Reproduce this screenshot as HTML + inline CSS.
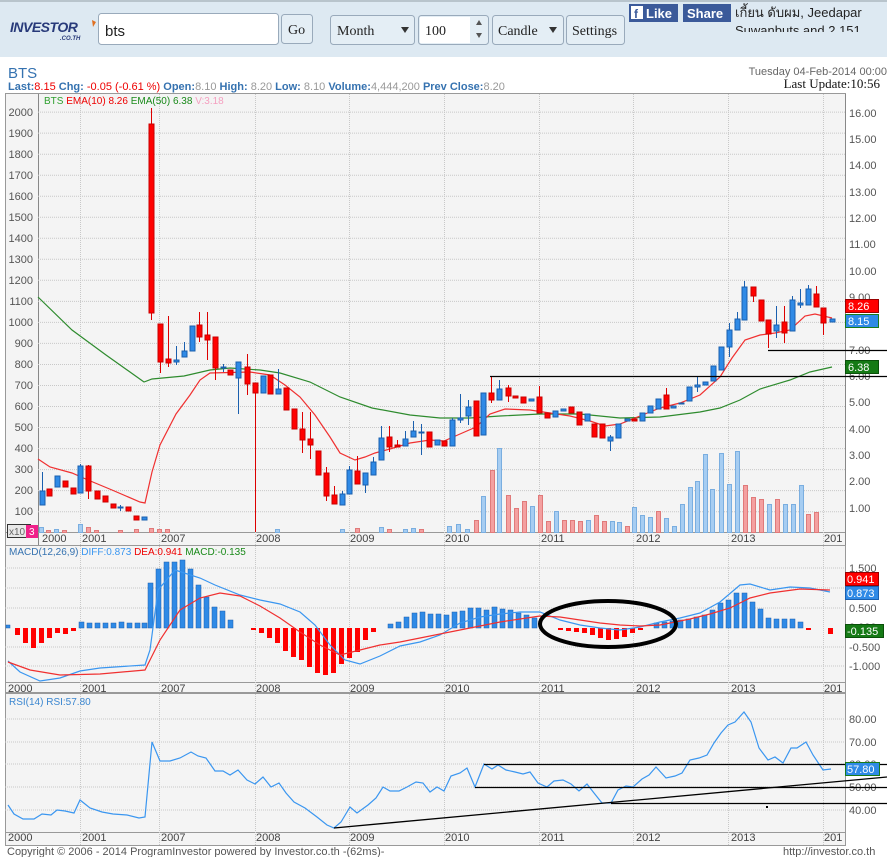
<!DOCTYPE html>
<html><head><meta charset="utf-8"><style>
html,body{margin:0;padding:0;background:#fff;width:887px;height:857px;overflow:hidden;font-family:"Liberation Sans","Noto Sans CJK SC",sans-serif}
svg{display:block}
.r{fill:#ff0000;stroke:#c80000;stroke-width:1}
.b{fill:#2f8ae6;stroke:#1a5fae;stroke-width:1}
.wr{stroke:#d00;stroke-width:1}
.wb{stroke:#1a5fae;stroke-width:1}
.vp{fill:#f4a0a0;stroke:#e07a7a}
.vb{fill:#a6cdf2;stroke:#7aaee0}
.g{stroke:#c8c8c8;stroke-dasharray:1 1;stroke-width:1}
.ax{font-size:11px;fill:#555}
.dt{font-size:11px;fill:#444}
</style></head><body>
<svg width="887" height="857" xmlns="http://www.w3.org/2000/svg" font-family="Liberation Sans, sans-serif">
<rect x="0" y="0" width="887" height="57" fill="#dde9f2"/>
<rect x="0" y="0" width="887" height="2" fill="#b8c4cc"/>
<text x="10" y="32" font-size="14" font-weight="bold" font-style="italic" fill="#283a7a" letter-spacing="-0.5">INVESTOR</text>
<text x="60" y="40" font-size="6" font-weight="bold" font-style="italic" fill="#283a7a">.CO.TH</text>
<path d="M92 20 L96 22 L93 27 Z" fill="#e07020"/>
<rect x="98.5" y="13.5" width="180" height="31" rx="3" fill="#fff" stroke="#9ab"/>
<text x="105" y="36" font-size="15" fill="#222">bts</text>
<rect x="281.5" y="14.5" width="31" height="29" rx="3" fill="#e4eef5" stroke="#9ab"/>
<text x="288" y="34" font-size="14" font-family="Liberation Serif, serif" fill="#222">Go</text>
<rect x="330.5" y="15.5" width="84" height="29" rx="3" fill="#e4eef5" stroke="#9ab"/>
<text x="337" y="35" font-size="14" font-family="Liberation Serif, serif" fill="#222">Month</text>
<path d="M401 27 L409 27 L405 33 Z" fill="#333"/>
<rect x="418.5" y="15.5" width="70" height="29" rx="3" fill="#e4eef5" stroke="#9ab"/>
<rect x="420" y="17" width="50" height="26" fill="#fff"/>
<text x="425" y="35" font-size="14" font-family="Liberation Serif, serif" fill="#222">100</text>
<path d="M476 25 L482 25 L479 20 Z M476 33 L482 33 L479 38 Z" fill="#555"/>
<rect x="492.5" y="15.5" width="71" height="29" rx="3" fill="#e4eef5" stroke="#9ab"/>
<text x="498" y="35" font-size="14" font-family="Liberation Serif, serif" fill="#222">Candle</text>
<path d="M549 27 L557 27 L553 33 Z" fill="#333"/>
<rect x="566.5" y="15.5" width="58" height="29" rx="3" fill="#e4eef5" stroke="#9ab"/>
<text x="572" y="35" font-size="14" font-family="Liberation Serif, serif" fill="#222">Settings</text>
<rect x="629" y="4" width="49" height="18" fill="#3b5a9a"/>
<rect x="631" y="6" width="12" height="13" fill="#fff"/>
<text x="634" y="18" font-size="12" font-weight="bold" fill="#3b5a9a">f</text>
<text x="646" y="18" font-size="13" font-weight="bold" fill="#fff">Like</text>
<rect x="683" y="4" width="48" height="18" fill="#3b5a9a"/>
<text x="687" y="18" font-size="13" font-weight="bold" fill="#fff">Share</text>
<text x="735" y="17" font-size="13" fill="#222" font-family="Liberation Sans, WenQuanYi Zen Hei, sans-serif">เกี้ยน ดับผม, Jeedapar</text>
<svg x="735" y="22" width="152" height="10"><text x="0" y="13" font-size="13" fill="#222">Suwanbuts and 2,151</text></svg>
<text x="8" y="78" font-size="15" fill="#3572b0">BTS</text>
<text x="8" y="90" font-size="11" font-weight="bold" fill="#3572b0">Last:<tspan fill="#e00" font-weight="normal">8.15 </tspan>Chg: <tspan fill="#e00" font-weight="normal">-0.05 (-0.61 %) </tspan> Open:<tspan fill="#999" font-weight="normal">8.10 </tspan>High: <tspan fill="#999" font-weight="normal">8.20 </tspan>Low: <tspan fill="#999" font-weight="normal">8.10 </tspan>Volume:<tspan fill="#999" font-weight="normal">4,444,200 </tspan> Prev Close:<tspan fill="#999" font-weight="normal">8.20</tspan></text>
<text x="887" y="75" font-size="11" fill="#666" text-anchor="end">Tuesday 04-Feb-2014 00:00</text>
<text x="880" y="88" font-size="13" fill="#111" text-anchor="end" font-family="Liberation Serif, serif">Last Update:10:56</text>

<rect x="5.5" y="93.5" width="840" height="452" fill="#f4f4f4" stroke="#999"/>
<line x1="38.5" y1="94" x2="38.5" y2="545" stroke="#888"/>
<line x1="5" y1="532.5" x2="845" y2="532.5" stroke="#999"/>
<rect x="846" y="94" width="41" height="451" fill="#fff"/>
<line x1="845.5" y1="94" x2="845.5" y2="545" stroke="#888"/>
<g class="g">
<line x1="38" y1="511.7" x2="845" y2="511.7"/><line x1="38" y1="490.6" x2="845" y2="490.6"/><line x1="38" y1="469.6" x2="845" y2="469.6"/><line x1="38" y1="448.6" x2="845" y2="448.6"/><line x1="38" y1="427.5" x2="845" y2="427.5"/><line x1="38" y1="406.5" x2="845" y2="406.5"/><line x1="38" y1="385.5" x2="845" y2="385.5"/><line x1="38" y1="364.5" x2="845" y2="364.5"/><line x1="38" y1="343.4" x2="845" y2="343.4"/><line x1="38" y1="322.4" x2="845" y2="322.4"/><line x1="38" y1="301.4" x2="845" y2="301.4"/><line x1="38" y1="280.3" x2="845" y2="280.3"/><line x1="38" y1="259.3" x2="845" y2="259.3"/><line x1="38" y1="238.3" x2="845" y2="238.3"/><line x1="38" y1="217.2" x2="845" y2="217.2"/><line x1="38" y1="196.2" x2="845" y2="196.2"/><line x1="38" y1="175.2" x2="845" y2="175.2"/><line x1="38" y1="154.2" x2="845" y2="154.2"/><line x1="38" y1="133.1" x2="845" y2="133.1"/><line x1="38" y1="112.1" x2="845" y2="112.1"/>
<line x1="80.5" y1="94" x2="80.5" y2="545"/><line x1="159.5" y1="94" x2="159.5" y2="545"/><line x1="255.5" y1="94" x2="255.5" y2="545"/><line x1="349.5" y1="94" x2="349.5" y2="545"/><line x1="444.5" y1="94" x2="444.5" y2="545"/><line x1="539.5" y1="94" x2="539.5" y2="545"/><line x1="633.5" y1="94" x2="633.5" y2="545"/><line x1="728.5" y1="94" x2="728.5" y2="545"/><line x1="823.5" y1="94" x2="823.5" y2="545"/>
</g>
<g class="ax" text-anchor="end">
<text x="33" y="515">100</text><text x="33" y="494">200</text><text x="33" y="473">300</text><text x="33" y="452">400</text><text x="33" y="431">500</text><text x="33" y="410">600</text><text x="33" y="389">700</text><text x="33" y="368">800</text><text x="33" y="347">900</text><text x="33" y="326">1000</text><text x="33" y="305">1100</text><text x="33" y="284">1200</text><text x="33" y="263">1300</text><text x="33" y="242">1400</text><text x="33" y="221">1500</text><text x="33" y="200">1600</text><text x="33" y="179">1700</text><text x="33" y="158">1800</text><text x="33" y="137">1900</text><text x="33" y="116">2000</text>
</g>
<g class="ax">
<text x="849" y="512">1.00</text><text x="849" y="485">2.00</text><text x="849" y="459">3.00</text><text x="849" y="433">4.00</text><text x="849" y="406">5.00</text><text x="849" y="380">6.00</text><text x="849" y="354">7.00</text><text x="849" y="327">8.00</text><text x="849" y="301">9.00</text><text x="849" y="275">10.00</text><text x="849" y="248">11.00</text><text x="849" y="222">12.00</text><text x="849" y="196">13.00</text><text x="849" y="169">14.00</text><text x="849" y="143">15.00</text><text x="849" y="117">16.00</text>
</g>
<text x="44" y="104" font-size="10"><tspan fill="#2ea02e">BTS </tspan><tspan fill="#e00">EMA(10) 8.26 </tspan><tspan fill="#1a8a1a">EMA(50) 6.38 </tspan><tspan fill="#f5a0c0">V:3.18</tspan></text>

<g>
<rect class="vb" x="39.5" y="527.5" width="4" height="5"/><rect class="vp" x="46.5" y="530.5" width="4" height="2"/><rect class="vb" x="54.5" y="529.5" width="4" height="3"/><rect class="vp" x="62.5" y="530.5" width="4" height="2"/><rect class="vb" x="78.5" y="524.5" width="4" height="8"/><rect class="vp" x="86.5" y="527.5" width="4" height="5"/><rect class="vp" x="94.5" y="530.5" width="4" height="2"/><rect class="vp" x="118.5" y="530.5" width="4" height="2"/><rect class="vp" x="134.5" y="529.5" width="4" height="3"/><rect class="vp" x="149.5" y="528.5" width="4" height="4"/><rect class="vp" x="157.5" y="529.5" width="4" height="3"/><rect class="vp" x="165.5" y="529.5" width="4" height="3"/><rect class="vb" x="275.5" y="529.5" width="4" height="3"/><rect class="vb" x="340.5" y="529.5" width="4" height="3"/><rect class="vp" x="355.5" y="528.5" width="4" height="4"/><rect class="vb" x="379.5" y="527.5" width="4" height="5"/><rect class="vp" x="387.5" y="529.5" width="4" height="3"/><rect class="vb" x="403.5" y="529.5" width="4" height="3"/><rect class="vb" x="411.5" y="528.5" width="4" height="4"/><rect class="vp" x="419.5" y="529.5" width="4" height="3"/>
<rect class="vb" x="447.5" y="526.5" width="4" height="6"/><rect class="vb" x="456.5" y="524.5" width="4" height="8"/><rect class="vb" x="465.5" y="529.5" width="4" height="3"/><rect class="vp" x="474.5" y="520.5" width="4" height="12"/><rect class="vb" x="481.5" y="496.5" width="4" height="36"/><rect class="vp" x="490.5" y="470.5" width="4" height="62"/><rect class="vb" x="497.5" y="448.5" width="4" height="84"/><rect class="vp" x="506.5" y="495.5" width="4" height="37"/><rect class="vp" x="514.5" y="508.5" width="4" height="24"/><rect class="vp" x="522.5" y="501.5" width="4" height="31"/><rect class="vb" x="530.5" y="506.5" width="4" height="26"/><rect class="vp" x="538.5" y="495.5" width="4" height="37"/><rect class="vp" x="546.5" y="521.5" width="4" height="11"/><rect class="vb" x="554.5" y="511.5" width="4" height="21"/><rect class="vp" x="562.5" y="520.5" width="4" height="12"/><rect class="vp" x="570.5" y="520.5" width="4" height="12"/><rect class="vp" x="578.5" y="521.5" width="4" height="11"/><rect class="vb" x="586.5" y="520.5" width="4" height="12"/><rect class="vp" x="594.5" y="515.5" width="4" height="17"/><rect class="vp" x="602.5" y="521.5" width="4" height="11"/><rect class="vb" x="610.5" y="521.5" width="4" height="11"/><rect class="vb" x="617.5" y="522.5" width="4" height="10"/><rect class="vp" x="625.5" y="526.5" width="4" height="6"/><rect class="vb" x="632.5" y="507.5" width="4" height="25"/><rect class="vb" x="640.5" y="515.5" width="4" height="17"/><rect class="vb" x="648.5" y="517.5" width="4" height="15"/><rect class="vp" x="656.5" y="511.5" width="4" height="21"/><rect class="vb" x="664.5" y="518.5" width="4" height="14"/><rect class="vb" x="672.5" y="526.5" width="4" height="6"/><rect class="vb" x="680.5" y="504.5" width="4" height="28"/><rect class="vb" x="688.5" y="487.5" width="4" height="45"/><rect class="vb" x="695.5" y="481.5" width="4" height="51"/><rect class="vb" x="703.5" y="454.5" width="4" height="78"/><rect class="vb" x="710.5" y="489.5" width="4" height="43"/><rect class="vb" x="719.5" y="453.5" width="4" height="79"/><rect class="vb" x="727.5" y="484.5" width="4" height="48"/><rect class="vb" x="735.5" y="451.5" width="4" height="81"/><rect class="vp" x="743.5" y="485.5" width="4" height="47"/><rect class="vp" x="751.5" y="497.5" width="4" height="35"/><rect class="vp" x="759.5" y="499.5" width="4" height="33"/><rect class="vb" x="767.5" y="504.5" width="4" height="28"/><rect class="vp" x="775.5" y="499.5" width="4" height="33"/><rect class="vb" x="783.5" y="504.5" width="4" height="28"/><rect class="vb" x="791.5" y="504.5" width="4" height="28"/><rect class="vb" x="799.5" y="485.5" width="4" height="47"/><rect class="vp" x="806.5" y="514.5" width="4" height="18"/><rect class="vp" x="814.5" y="512.5" width="4" height="20"/>
</g>

<polyline fill="none" stroke="#2e8b2e" stroke-width="1.2" points="38,297 72,330 106,355 144,382 152,379 184,376 210,370 230,368 260,370 280,373 310,382 340,397 372,408 410,415 440,418 470,418 500,416 540,414 580,414 620,418 660,417 700,412 720,408 740,400 760,389 790,380 810,372 832,367"/>
<polyline fill="none" stroke="#f03030" stroke-width="1.2" points="38,459 50,467 72,473 88,480 112,490 140,502 145,503 152,472 160,445 176,414 190,395 200,380 210,373 250,372 270,375 285,385 300,397 315,415 330,437 340,453 355,460 365,457 375,453 390,449 410,443 430,440 444,441 460,434 476,427 490,414 505,409 530,410 550,413 570,416 590,421 605,426 620,424 640,416 660,408 680,403 700,395 720,377 732,358 745,340 760,335 775,333 790,330 805,316 815,314 832,318"/>

<g class="wr">
<line x1="88.5" y1="465" x2="88.5" y2="499"/><line x1="151.5" y1="108" x2="151.5" y2="320"/><line x1="160.5" y1="324" x2="160.5" y2="373"/><line x1="168.5" y1="316" x2="168.5" y2="367"/><line x1="199.5" y1="312" x2="199.5" y2="342"/><line x1="207.5" y1="312" x2="207.5" y2="360"/><line x1="215.5" y1="337" x2="215.5" y2="380"/><line x1="247.5" y1="354" x2="247.5" y2="395"/><line x1="255.5" y1="383" x2="255.5" y2="532"/><line x1="302.5" y1="412" x2="302.5" y2="453"/><line x1="310.5" y1="412" x2="310.5" y2="459"/><line x1="326.5" y1="467" x2="326.5" y2="501"/><line x1="334.5" y1="486" x2="334.5" y2="504"/><line x1="357.5" y1="456" x2="357.5" y2="484"/><line x1="389.5" y1="426" x2="389.5" y2="452"/><line x1="397.5" y1="440" x2="397.5" y2="447"/><line x1="491.5" y1="376" x2="491.5" y2="403"/><line x1="508.5" y1="385" x2="508.5" y2="402"/><line x1="539.5" y1="386" x2="539.5" y2="413"/><line x1="666.5" y1="388" x2="666.5" y2="409"/><line x1="753.5" y1="287" x2="753.5" y2="302"/><line x1="768.5" y1="320" x2="768.5" y2="348"/><line x1="784.5" y1="306" x2="784.5" y2="343"/><line x1="816.5" y1="286" x2="816.5" y2="307"/><line x1="823.5" y1="308" x2="823.5" y2="335"/>
</g>
<g class="wb">
<line x1="42.5" y1="472" x2="42.5" y2="505"/><line x1="80.5" y1="464" x2="80.5" y2="493"/><line x1="120.5" y1="505" x2="120.5" y2="511"/><line x1="176.5" y1="346" x2="176.5" y2="365"/><line x1="184.5" y1="342" x2="184.5" y2="357"/><line x1="223.5" y1="364" x2="223.5" y2="372"/><line x1="238.5" y1="362" x2="238.5" y2="414"/><line x1="278.5" y1="369" x2="278.5" y2="394"/><line x1="342.5" y1="491" x2="342.5" y2="505"/><line x1="349.5" y1="466" x2="349.5" y2="494"/><line x1="365.5" y1="473" x2="365.5" y2="493"/><line x1="373.5" y1="457" x2="373.5" y2="475"/><line x1="381.5" y1="426" x2="381.5" y2="460"/><line x1="405.5" y1="431" x2="405.5" y2="446"/><line x1="413.5" y1="421" x2="413.5" y2="437"/><line x1="421.5" y1="424" x2="421.5" y2="455"/><line x1="452.5" y1="418" x2="452.5" y2="446"/><line x1="460.5" y1="394" x2="460.5" y2="423"/><line x1="468.5" y1="400" x2="468.5" y2="425"/><line x1="499.5" y1="380" x2="499.5" y2="400"/><line x1="610.5" y1="435" x2="610.5" y2="451"/><line x1="697.5" y1="376" x2="697.5" y2="392"/><line x1="729.5" y1="323" x2="729.5" y2="357"/><line x1="737.5" y1="312" x2="737.5" y2="330"/><line x1="744.5" y1="281" x2="744.5" y2="320"/><line x1="776.5" y1="306" x2="776.5" y2="338"/><line x1="792.5" y1="296" x2="792.5" y2="331"/><line x1="800.5" y1="289" x2="800.5" y2="308"/><line x1="808.5" y1="285" x2="808.5" y2="305"/>
</g>
<g class="r">
<rect x="47" y="489" width="5" height="7"/><rect x="63" y="481" width="5" height="6"/><rect x="71" y="488" width="5" height="6"/><rect x="86" y="466" width="5" height="25"/><rect x="95" y="491" width="5" height="8"/><rect x="103" y="496" width="5" height="6"/><rect x="111" y="504" width="5" height="4"/><rect x="126" y="507" width="5" height="4"/><rect x="134" y="516" width="5" height="4"/><rect x="149" y="124" width="5" height="189"/><rect x="158" y="324" width="5" height="38"/><rect x="166" y="359" width="5" height="4"/><rect x="197" y="325" width="5" height="12"/><rect x="205" y="335" width="5" height="5"/><rect x="213" y="337" width="5" height="31"/><rect x="228" y="370" width="5" height="5"/><rect x="245" y="367" width="5" height="17"/><rect x="253" y="383" width="5" height="10"/><rect x="268" y="375" width="5" height="19"/><rect x="284" y="388" width="5" height="22"/><rect x="292" y="409" width="5" height="20"/><rect x="300" y="429" width="5" height="11"/><rect x="308" y="439" width="5" height="6"/><rect x="316" y="451" width="5" height="24"/><rect x="324" y="473" width="5" height="23"/><rect x="332" y="495" width="5" height="9"/><rect x="355" y="471" width="5" height="13"/><rect x="387" y="437" width="5" height="10"/><rect x="395" y="445" width="5" height="2"/><rect x="427" y="432" width="5" height="15"/><rect x="442" y="441" width="5" height="5"/><rect x="474" y="401" width="5" height="35"/><rect x="489" y="393" width="5" height="7"/><rect x="506" y="388" width="5" height="8"/><rect x="513" y="396" width="5" height="2"/><rect x="521" y="397" width="5" height="6"/><rect x="537" y="397" width="5" height="16"/><rect x="545" y="413" width="5" height="5"/><rect x="569" y="407" width="5" height="6"/><rect x="577" y="412" width="5" height="13"/><rect x="592" y="424" width="5" height="13"/><rect x="600" y="424" width="5" height="14"/><rect x="632" y="419" width="5" height="2"/><rect x="664" y="395" width="5" height="14"/><rect x="751" y="287" width="5" height="9"/><rect x="759" y="300" width="5" height="21"/><rect x="766" y="320" width="5" height="14"/><rect x="782" y="322" width="5" height="11"/><rect x="814" y="294" width="5" height="13"/><rect x="821" y="308" width="5" height="15"/>
</g>
<g class="b">
<rect x="40" y="491" width="5" height="14"/><rect x="55" y="476" width="5" height="11"/><rect x="78" y="466" width="5" height="27"/><rect x="118" y="507" width="5" height="1"/><rect x="142" y="517" width="5" height="3"/><rect x="174" y="360" width="5" height="2"/><rect x="182" y="351" width="5" height="6"/><rect x="190" y="326" width="5" height="25"/><rect x="221" y="367" width="5" height="1"/><rect x="236" y="362" width="5" height="16"/><rect x="261" y="376" width="5" height="17"/><rect x="276" y="389" width="5" height="5"/><rect x="340" y="494" width="5" height="11"/><rect x="347" y="470" width="5" height="24"/><rect x="363" y="473" width="5" height="12"/><rect x="371" y="462" width="5" height="13"/><rect x="379" y="438" width="5" height="22"/><rect x="403" y="439" width="5" height="7"/><rect x="411" y="431" width="5" height="6"/><rect x="419" y="432" width="5" height="1"/><rect x="435" y="440" width="5" height="5"/><rect x="450" y="420" width="5" height="26"/><rect x="458" y="418" width="5" height="2"/><rect x="466" y="407" width="5" height="9"/><rect x="481" y="393" width="5" height="42"/><rect x="497" y="389" width="5" height="11"/><rect x="529" y="399" width="5" height="2"/><rect x="553" y="411" width="5" height="6"/><rect x="561" y="409" width="5" height="2"/><rect x="585" y="414" width="5" height="7"/><rect x="608" y="437" width="5" height="4"/><rect x="616" y="424" width="5" height="14"/><rect x="625" y="419" width="5" height="2"/><rect x="640" y="413" width="5" height="8"/><rect x="648" y="406" width="5" height="7"/><rect x="656" y="399" width="5" height="10"/><rect x="671" y="406" width="5" height="2"/><rect x="679" y="403" width="5" height="1"/><rect x="687" y="387" width="5" height="14"/><rect x="695" y="385" width="5" height="2"/><rect x="703" y="382" width="5" height="3"/><rect x="711" y="366" width="5" height="15"/><rect x="719" y="347" width="5" height="23"/><rect x="727" y="330" width="5" height="17"/><rect x="735" y="319" width="5" height="11"/><rect x="742" y="287" width="5" height="33"/><rect x="774" y="325" width="5" height="6"/><rect x="790" y="300" width="5" height="31"/><rect x="798" y="303" width="5" height="2"/><rect x="806" y="289" width="5" height="16"/><rect x="830" y="319" width="5" height="3"/>
</g>
<line x1="490" y1="376.5" x2="887" y2="376.5" stroke="#000" stroke-width="1.3"/>
<line x1="768" y1="350.5" x2="887" y2="350.5" stroke="#000" stroke-width="1.3"/>
<rect x="845.5" y="299.5" width="33" height="13" fill="#f00" stroke="#900"/><text x="848" y="310" font-size="11" fill="#fff">8.26</text>
<rect x="845.5" y="314.5" width="33" height="13" fill="#2f8ae6" stroke="#1a7a1a"/><text x="848" y="325" font-size="11" fill="#fff">8.15</text>
<rect x="845.5" y="360.5" width="33" height="13" fill="#157a15" stroke="#0a500a"/><text x="848" y="371" font-size="11" fill="#fff">6.38</text>
<rect x="7.5" y="524.5" width="23" height="13" fill="#e8e8e8" stroke="#333"/><text x="9" y="535" font-size="10" fill="#666">x10</text>
<rect x="26" y="525" width="12" height="13" fill="#f0208a"/><text x="29" y="535" font-size="10" fill="#fff">3</text>
<g class="dt"><text x="42" y="542">2000</text><text x="82" y="542">2001</text><text x="161" y="542">2007</text><text x="256" y="542">2008</text><text x="350" y="542">2009</text><text x="445" y="542">2010</text><text x="541" y="542">2011</text><text x="636" y="542">2012</text><text x="731" y="542">2013</text><text x="824" y="542">201</text></g>

<rect x="5.5" y="545.5" width="840" height="147" fill="#f4f4f4" stroke="#999"/>
<rect x="846" y="546" width="41" height="146" fill="#fff"/>
<line x1="5" y1="682.5" x2="845" y2="682.5" stroke="#999"/>
<g class="g">
<line x1="5" y1="568" x2="845" y2="568"/><line x1="5" y1="588" x2="845" y2="588"/><line x1="5" y1="608" x2="845" y2="608"/><line x1="5" y1="647" x2="845" y2="647"/><line x1="5" y1="666" x2="845" y2="666"/>
<line x1="80.5" y1="546" x2="80.5" y2="692"/><line x1="159.5" y1="546" x2="159.5" y2="692"/><line x1="255.5" y1="546" x2="255.5" y2="692"/><line x1="349.5" y1="546" x2="349.5" y2="692"/><line x1="444.5" y1="546" x2="444.5" y2="692"/><line x1="539.5" y1="546" x2="539.5" y2="692"/><line x1="633.5" y1="546" x2="633.5" y2="692"/><line x1="728.5" y1="546" x2="728.5" y2="692"/><line x1="823.5" y1="546" x2="823.5" y2="692"/>
</g>
<text x="9" y="555" font-size="10"><tspan fill="#3572b0">MACD(12,26,9) </tspan><tspan fill="#3a96f0">DIFF:0.873 </tspan><tspan fill="#e00">DEA:0.941 </tspan><tspan fill="#1a8a1a">MACD:-0.135</tspan></text>
<g class="ax"><text x="849" y="572">1.500</text><text x="849" y="612">0.500</text><text x="849" y="631">0.000</text><text x="849" y="651">-0.500</text><text x="849" y="670">-1.000</text></g>
<g fill="#2f8ae6" stroke="#1a5fae" stroke-width="0.5">
<rect x="6" y="625" width="4" height="3"/>
<rect x="79" y="622" width="5" height="6"/><rect x="87" y="623" width="5" height="5"/><rect x="95" y="623" width="5" height="5"/><rect x="103" y="623" width="5" height="5"/><rect x="111" y="623" width="5" height="5"/><rect x="119" y="622" width="5" height="6"/><rect x="127" y="623" width="5" height="5"/><rect x="135" y="623" width="5" height="5"/><rect x="142" y="623" width="5" height="5"/>
<rect x="148" y="583" width="5" height="45"/><rect x="156" y="569" width="5" height="59"/><rect x="164" y="562" width="5" height="66"/><rect x="172" y="562" width="5" height="66"/><rect x="180" y="560" width="5" height="68"/><rect x="188" y="569" width="5" height="59"/><rect x="196" y="585" width="5" height="43"/><rect x="204" y="597" width="5" height="31"/><rect x="212" y="607" width="5" height="21"/><rect x="220" y="611" width="5" height="17"/><rect x="228" y="620" width="5" height="8"/>
<rect x="388" y="624" width="5" height="4"/><rect x="396" y="622" width="5" height="6"/><rect x="404" y="617" width="5" height="11"/><rect x="412" y="613" width="5" height="15"/><rect x="420" y="612" width="5" height="16"/><rect x="428" y="614" width="5" height="14"/><rect x="436" y="614" width="5" height="14"/><rect x="444" y="615" width="5" height="13"/><rect x="452" y="612" width="5" height="16"/><rect x="460" y="611" width="5" height="17"/><rect x="468" y="608" width="5" height="20"/><rect x="476" y="608" width="5" height="20"/><rect x="484" y="610" width="5" height="18"/><rect x="492" y="607" width="5" height="21"/><rect x="500" y="609" width="5" height="19"/><rect x="508" y="610" width="5" height="18"/><rect x="516" y="613" width="5" height="15"/><rect x="524" y="615" width="5" height="13"/><rect x="532" y="618" width="5" height="10"/>
<rect x="654" y="623" width="5" height="5"/><rect x="662" y="622" width="5" height="6"/><rect x="670" y="621" width="5" height="7"/><rect x="678" y="620" width="5" height="8"/><rect x="686" y="619" width="5" height="9"/><rect x="694" y="617" width="5" height="11"/><rect x="702" y="615" width="5" height="13"/><rect x="710" y="610" width="5" height="18"/><rect x="718" y="603" width="5" height="25"/><rect x="726" y="600" width="5" height="28"/><rect x="734" y="593" width="5" height="35"/><rect x="742" y="593" width="5" height="35"/><rect x="750" y="602" width="5" height="26"/><rect x="758" y="609" width="5" height="19"/><rect x="766" y="618" width="5" height="10"/><rect x="774" y="619" width="5" height="9"/><rect x="782" y="619" width="5" height="9"/><rect x="790" y="619" width="5" height="9"/><rect x="798" y="622" width="5" height="6"/>
</g>
<g fill="#f00">
<rect x="15" y="628" width="5" height="7"/><rect x="23" y="628" width="5" height="15"/><rect x="31" y="628" width="5" height="20"/><rect x="39" y="628" width="5" height="15"/><rect x="47" y="628" width="5" height="10"/><rect x="55" y="628" width="5" height="5"/><rect x="63" y="628" width="5" height="6"/><rect x="71" y="628" width="5" height="3"/>
<rect x="251" y="628" width="5" height="2"/><rect x="259" y="628" width="5" height="5"/><rect x="267" y="628" width="5" height="10"/><rect x="275" y="628" width="5" height="15"/><rect x="283" y="628" width="5" height="23"/><rect x="291" y="628" width="5" height="29"/><rect x="299" y="628" width="5" height="32"/><rect x="307" y="628" width="5" height="39"/><rect x="315" y="628" width="5" height="45"/><rect x="323" y="628" width="5" height="47"/><rect x="331" y="628" width="5" height="45"/><rect x="339" y="628" width="5" height="36"/><rect x="347" y="628" width="5" height="30"/><rect x="355" y="628" width="5" height="24"/><rect x="363" y="628" width="5" height="12"/><rect x="371" y="628" width="5" height="4"/>
<rect x="558" y="628" width="5" height="2"/><rect x="566" y="628" width="5" height="3"/><rect x="574" y="628" width="5" height="4"/><rect x="582" y="628" width="5" height="5"/><rect x="590" y="628" width="5" height="7"/><rect x="598" y="628" width="5" height="10"/><rect x="606" y="628" width="5" height="12"/><rect x="614" y="628" width="5" height="11"/><rect x="622" y="628" width="5" height="9"/><rect x="630" y="628" width="5" height="5"/><rect x="638" y="628" width="5" height="2"/>
<rect x="806" y="628" width="5" height="2"/><rect x="828" y="628" width="5" height="6"/>
</g>
<polyline fill="none" stroke="#3a96f0" stroke-width="1.2" points="8,661 20,672 40,681 60,678 80,671 100,668 145,665 150,650 158,590 175,570 200,578 215,585 240,595 260,600 280,604 300,612 315,625 330,645 345,660 360,664 380,656 400,646 420,642 440,635 460,623 480,617 500,614 520,612 540,612 560,620 580,625 600,628 620,630 640,627 660,622 680,618 700,613 720,602 740,585 750,584 770,590 790,587 810,588 830,592"/>
<polyline fill="none" stroke="#f03030" stroke-width="1.2" points="8,662 30,670 60,675 100,674 145,670 160,640 180,610 200,598 220,593 240,596 260,606 280,618 300,632 320,645 340,655 360,650 380,645 400,642 430,636 460,630 480,626 500,622 520,619 540,616 560,617 580,620 600,623 620,625 640,626 660,625 690,619 710,614 730,608 750,598 770,593 800,589 830,590"/>
<ellipse cx="608" cy="624" rx="68" ry="23" fill="none" stroke="#000" stroke-width="4"/>
<rect x="845.5" y="572.5" width="33" height="13" fill="#f00" stroke="#900"/><text x="847" y="583" font-size="11" fill="#fff">0.941</text>
<rect x="845.5" y="586.5" width="33" height="13" fill="#2f8ae6" stroke="#1a5fae"/><text x="847" y="597" font-size="11" fill="#fff">0.873</text>
<rect x="845.5" y="624.5" width="38" height="13" fill="#157a15" stroke="#0a500a"/><text x="847" y="635" font-size="11" fill="#fff">-0.135</text>
<g class="dt"><text x="8" y="692">2000</text><text x="82" y="692">2001</text><text x="161" y="692">2007</text><text x="256" y="692">2008</text><text x="350" y="692">2009</text><text x="445" y="692">2010</text><text x="541" y="692">2011</text><text x="636" y="692">2012</text><text x="731" y="692">2013</text><text x="824" y="692">201</text></g>

<rect x="5.5" y="693.5" width="840" height="152" fill="#f4f4f4" stroke="#999"/>
<rect x="846" y="694" width="41" height="151" fill="#fff"/>
<line x1="5" y1="832.5" x2="845" y2="832.5" stroke="#999"/>
<g class="g">
<line x1="5" y1="719" x2="845" y2="719"/><line x1="5" y1="742" x2="845" y2="742"/><line x1="5" y1="764" x2="845" y2="764"/><line x1="5" y1="787" x2="845" y2="787"/><line x1="5" y1="810" x2="845" y2="810"/>
<line x1="80.5" y1="694" x2="80.5" y2="845"/><line x1="159.5" y1="694" x2="159.5" y2="845"/><line x1="255.5" y1="694" x2="255.5" y2="845"/><line x1="349.5" y1="694" x2="349.5" y2="845"/><line x1="444.5" y1="694" x2="444.5" y2="845"/><line x1="539.5" y1="694" x2="539.5" y2="845"/><line x1="633.5" y1="694" x2="633.5" y2="845"/><line x1="728.5" y1="694" x2="728.5" y2="845"/><line x1="823.5" y1="694" x2="823.5" y2="845"/>
</g>
<text x="9" y="705" font-size="10" fill="#3a86d0">RSI(14) RSI:57.80</text>
<g class="ax"><text x="849" y="723">80.00</text><text x="849" y="746">70.00</text><text x="849" y="768">60.00</text><text x="849" y="791">50.00</text><text x="849" y="814">40.00</text></g>
<polyline fill="none" stroke="#3a96f0" stroke-width="1.2" points="8,805 14,814 23,819 34,819 42,814 51,815 57,810 65,811 74,813 80,800 90,808 102,812 113,814 127,815 139,818 145,817 152,742 160,761 170,761 180,758 191,752 198,756 206,758 215,771 223,771 230,775 238,770 247,780 255,784 263,777 271,787 279,783 286,793 294,802 305,808 317,817 327,825 334,828 341,822 350,807 357,813 368,805 376,798 383,787 390,791 399,791 407,787 416,782 423,783 430,792 437,787 444,791 451,776 460,773 467,768 475,787 484,764 492,769 498,765 506,770 515,772 523,774 530,772 538,783 547,787 554,781 563,780 571,784 579,791 587,784 594,793 602,803 611,803 618,790 626,786 633,787 642,779 649,775 656,767 666,778 675,776 682,773 690,760 699,758 707,755 714,743 721,733 728,725 735,722 744,712 751,722 759,748 768,760 775,757 783,763 791,748 797,748 806,742 813,755 823,770 831,769"/>
<g stroke="#000" stroke-width="1.3">
<line x1="484" y1="764.5" x2="887" y2="764.5"/><line x1="475" y1="787.5" x2="887" y2="787.5"/><line x1="611" y1="803.5" x2="887" y2="803.5"/><line x1="334" y1="828" x2="887" y2="777"/>
</g>
<rect x="766" y="806" width="2" height="2" fill="#000"/>
<rect x="845.5" y="762.5" width="34" height="13" fill="#2f8ae6" stroke="#1a7a1a"/><text x="847" y="773" font-size="11" fill="#fff">57.80</text>
<g class="dt"><text x="8" y="841">2000</text><text x="82" y="841">2001</text><text x="161" y="841">2007</text><text x="256" y="841">2008</text><text x="350" y="841">2009</text><text x="445" y="841">2010</text><text x="541" y="841">2011</text><text x="636" y="841">2012</text><text x="731" y="841">2013</text><text x="824" y="841">201</text></g>
<text x="7" y="855" font-size="11" fill="#555">Copyright © 2006 - 2014 ProgramInvestor powered by Investor.co.th -(62ms)-</text>
<text x="783" y="855" font-size="11" fill="#555">http://investor.co.th</text>
</svg>
</body></html>
